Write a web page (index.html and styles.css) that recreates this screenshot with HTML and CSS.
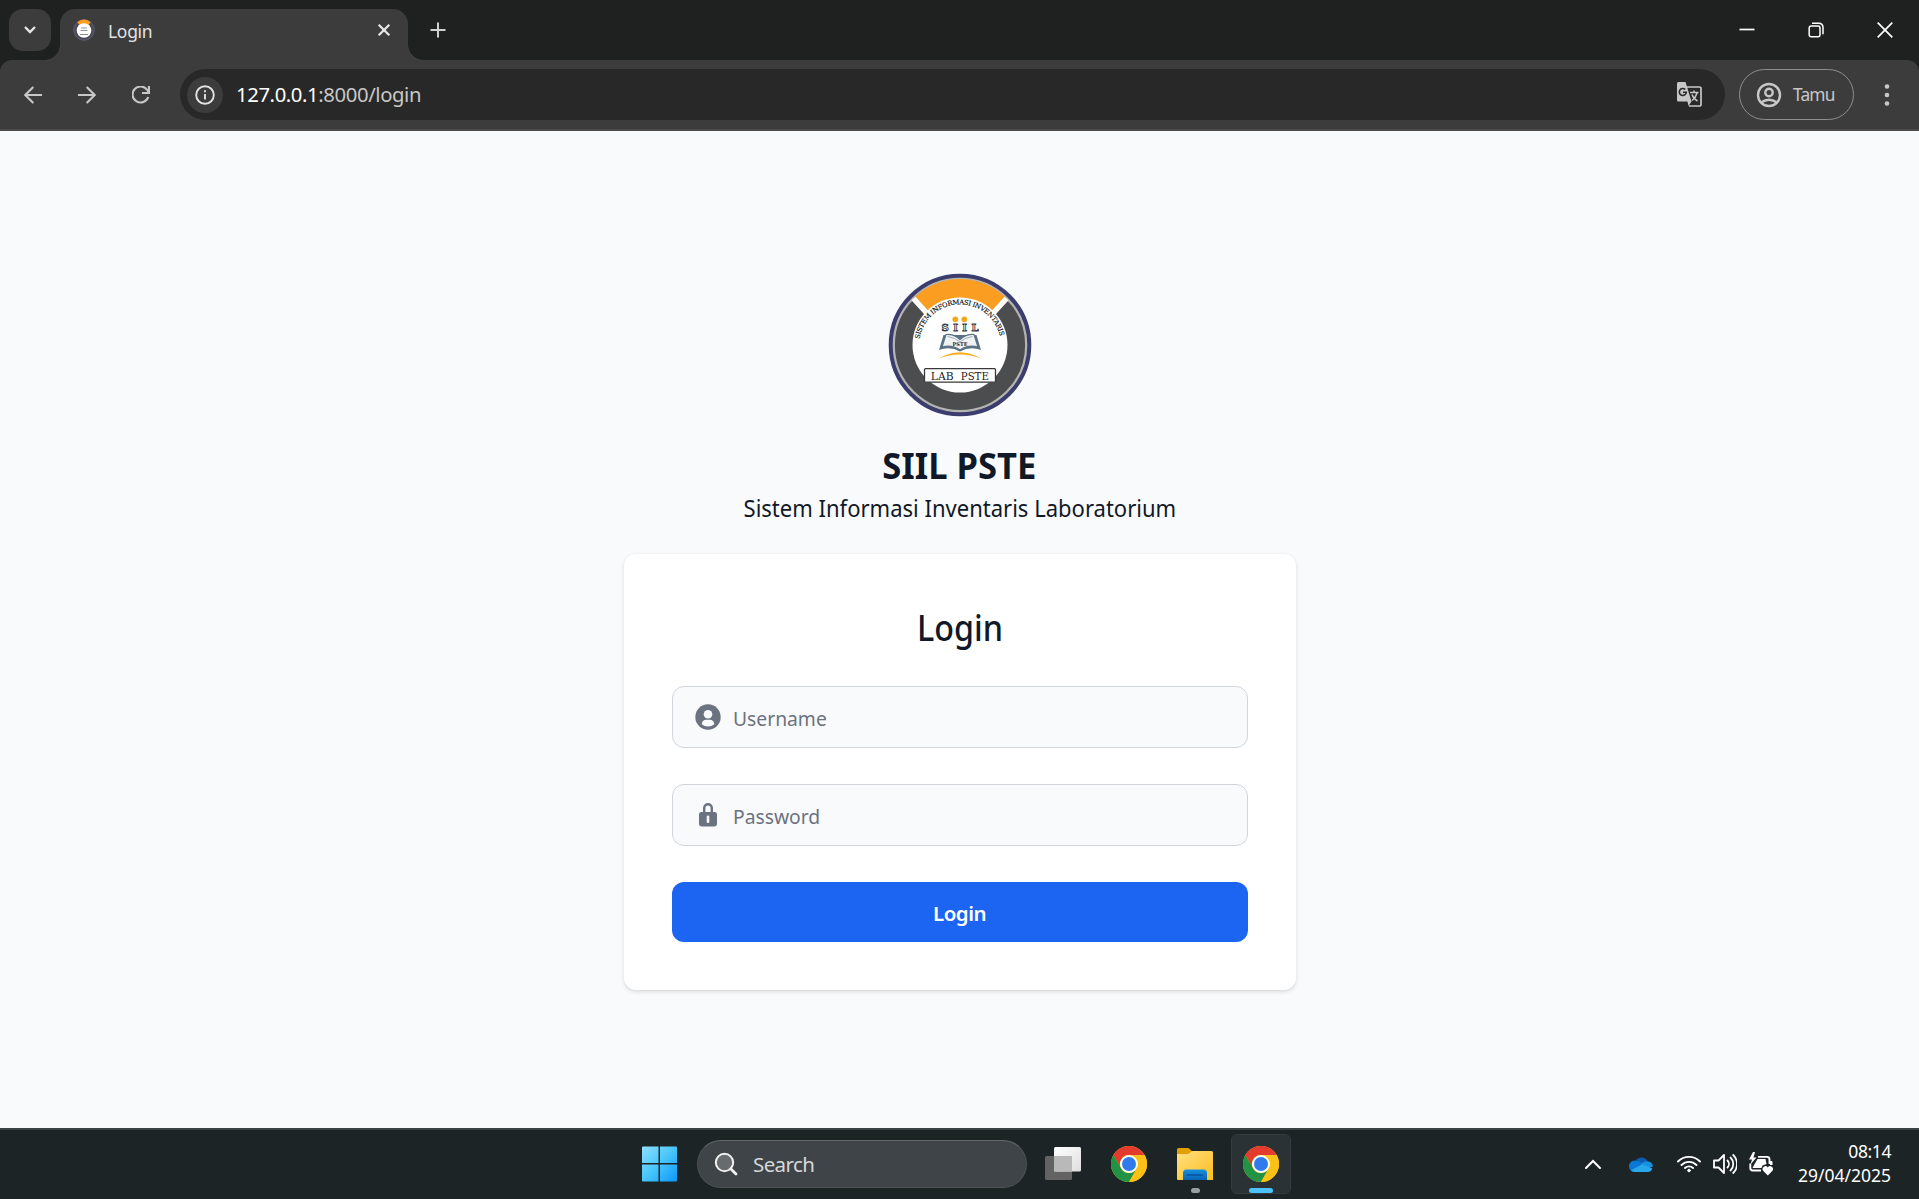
FILE: index.html
```
<!DOCTYPE html>
<html lang="id">
<head>
<meta charset="utf-8">
<title>Login</title>
<link rel="stylesheet" href="styles.css">
</head>
<body>
<svg class="defs" width="0" height="0" aria-hidden="true">
  <defs>
    <symbol id="chrome" viewBox="0 0 36 36">
      <circle cx="18" cy="18" r="18" fill="#fbc116"/>
      <path d="M2.4 9A18 18 0 0 1 33.6 9H18A9 9 0 0 0 10.2 22.5z" fill="#e33b2e"/>
      <path d="M2.4 9A18 18 0 0 0 18 36L25.8 22.5A9 9 0 0 1 10.2 22.5z" fill="#229342"/>
      <path d="M33.6 9A18 18 0 0 1 18 36L25.8 22.5A9 9 0 0 0 18 9z" fill="#fbc116"/>
      <circle cx="18" cy="18" r="9" fill="#fff"/>
      <circle cx="18" cy="18" r="7" fill="#2f7bed"/>
    </symbol>
    <symbol id="emblem" viewBox="0 0 144 144">
      <circle cx="72" cy="72" r="69.3" fill="#4b4d4e" stroke="#3b3d6e" stroke-width="4"/>
      <circle cx="72" cy="72" r="66.2" fill="none" stroke="#b5b4b4" stroke-width="2.2"/>
      <path d="M25 26A65.2 65.2 0 0 1 119 26L103 42A44 44 0 0 0 41 42z" fill="#fb9d20"/>
      <path d="M25.500 25.500L46 48M118.500 25.500L98 48" stroke="#fff" stroke-width="5.500"/>
      <circle cx="72" cy="72" r="47.500" fill="#fff"/>
      <path id="arc" d="M31.500 66A41 41 0 0 1 112.500 66" fill="none"/>
      <text class="emblem-serif" font-size="6.700" fill="#111" stroke="#111" stroke-width=".15"><textPath href="#arc" textLength="113" lengthAdjust="spacing">SISTEM INFORMASI INVENTARIS</textPath></text>
      <g class="emblem-serif" font-size="10" font-weight="700" fill="#fff" stroke="#3a3f47" stroke-width=".9" text-anchor="middle">
        <text x="57" y="58">S</text><text x="67.500" y="58">I</text><text x="76.500" y="58">I</text><text x="87" y="58">L</text>
      </g>
      <g fill="#f6a81c"><circle cx="67.300" cy="46.300" r="2.900"/><circle cx="76.300" cy="46.300" r="2.900"/></g>
      <path d="M55.500 62L51 77Q62 73 72 78.500Q82 73 93 77L88.500 62" fill="#5b7183"/>
      <path d="M58 61.500Q66 61 72 66.500Q78 61 86 61.500L90 74Q80 71.500 72 77Q64 71.500 54 74z" fill="#eef2f5" stroke="#5b7183" stroke-width="1.200"/>
      <path d="M59.500 63.500Q67 64.500 72 69Q77 64.500 84.500 63.500" fill="none" stroke="#9db0be"/>
      <text class="emblem-serif" x="72" y="72.500" font-size="5" font-weight="700" text-anchor="middle" fill="#24282d">PSTE</text>
      <path d="M51 85.500Q72 73 93 85.500Q72 77.500 51 85.500z" fill="#f5b021"/>
      <rect x="36.500" y="95.700" width="71" height="13.500" rx="1" fill="#fff" stroke="#38393a" stroke-width="1.300"/>
      <g class="emblem-serif" font-size="11.300" fill="#1c1c1c"><text x="42.800" y="106.700" textLength="22.800" lengthAdjust="spacingAndGlyphs">LAB</text><text x="72.800" y="106.700" textLength="28" lengthAdjust="spacingAndGlyphs">PSTE</text></g>
    </symbol>
  </defs>
</svg>

<header class="tabstrip">
  <button class="tab-search" aria-label="Search tabs"><svg width="14" height="10" viewBox="0 0 14 10"><path d="M2 2l5 5 5-5" fill="none" stroke="#e6e6e6" stroke-width="2.400"/></svg></button>
  <div class="tab">
    <svg width="22" height="22" viewBox="0 0 22 22"><circle cx="11" cy="11" r="10.300" fill="#4a4a55" stroke="#5d5d78"/><path d="M4.300 3A10 10 0 0 1 17.700 3L15 7H7z" fill="#fb9d20"/><circle cx="11" cy="11.500" r="7.300" fill="#fff"/><path d="M8 9h6M7.500 11.500h7" stroke="#8c98a0" stroke-width="1.200"/><path d="M7 15.500h8" stroke="#888"/></svg>
    <span class="tab-title">Login</span>
    <svg class="tab-close" width="14" height="14" viewBox="0 0 14 14"><path d="M1.700 1.700l10.600 10.600M12.300 1.700L1.700 12.300" stroke="#e8e8e8" stroke-width="2.200"/></svg>
  </div>
  <svg class="new-tab" width="16" height="16" viewBox="0 0 16 16"><path d="M8 .5v15M.5 8h15" stroke="#d0d0d0" stroke-width="2"/></svg>
  <div class="window-buttons">
    <svg width="16" height="16" viewBox="0 0 16 16"><path d="M.5 7.500h15" stroke="#fff" stroke-width="1.700"/></svg>
    <svg width="16" height="16" viewBox="0 0 16 16" fill="none" stroke="#fff" stroke-width="1.500"><rect x="1.200" y="4" width="10.800" height="10.800" rx="2"/><path d="M4 1.200h7a4 4 0 0 1 4 4v7"/></svg>
    <svg width="16" height="16" viewBox="0 0 16 16"><path d="M.7.7l14.600 14.600M15.300.7L.7 15.300" stroke="#fff" stroke-width="1.700"/></svg>
  </div>
</header>

<nav class="toolbar">
  <svg class="nav-icon" width="18" height="18" viewBox="0 0 18 18"><path d="M18 9H1.500M9.300 1L1.300 9l8 8"/></svg>
  <svg class="nav-icon" width="18" height="18" viewBox="0 0 18 18"><path d="M0 9h16.500M8.700 1l8 8-8 8"/></svg>
  <svg class="nav-icon" width="18" height="18" viewBox="0 0 18 18"><path d="M16.200 11A8 8 0 1 1 15.200 4L16.800 6.200M17 0v7h-7"/></svg>
  <div class="omnibox">
    <span class="site-info"><svg width="20" height="20" viewBox="0 0 20 20"><circle cx="10" cy="10" r="8.800" fill="none" stroke="#e3e3e3" stroke-width="1.900"/><path d="M10 9v5.500M10 5.300v2" stroke="#e3e3e3" stroke-width="1.900"/></svg></span>
    <span class="url"><b>127.0.0.1</b>:8000/login</span>
    <svg class="translate" width="26" height="26" viewBox="0 0 26 26">
      <path d="M9 6h14.500a1.500 1.500 0 0 1 1.500 1.500V23.500a1.500 1.500 0 0 1-1.500 1.500H13" fill="none" stroke="#c7c7c7" stroke-width="1.700"/>
      <path d="M2.500 1H9.500L15.500 20.500H2.500A1.500 1.500 0 0 1 1 19V2.500A1.500 1.500 0 0 1 2.500 1zM11.500 20.500h4L12.500 25z" fill="#c7c7c7"/>
      <path d="M9.300 8.500A3.500 3.500 0 1 0 10.300 11.200H7" fill="none" stroke="#282828" stroke-width="1.600"/>
      <path d="M14 11.500h8.500M18 9.500v2M21 12c-1 4-3 6-5 7.500M16 13.500c1 3 3 5 5.500 6.500" fill="none" stroke="#c7c7c7" stroke-width="1.500"/>
    </svg>
  </div>
  <div class="profile">
    <svg width="26" height="26" viewBox="0 0 26 26" fill="none" stroke="#c7c7c7" stroke-width="2.400"><circle cx="13" cy="13" r="11"/><circle cx="13" cy="10.500" r="3.700"/><path d="M5 20.500q8-5.500 16 0"/></svg>
    <span>Tamu</span>
  </div>
  <svg class="menu" width="6" height="22" viewBox="0 0 6 22" fill="#c7c7c7"><circle cx="3" cy="2.500" r="2.300"/><circle cx="3" cy="11" r="2.300"/><circle cx="3" cy="19.500" r="2.300"/></svg>
</nav>

<main class="page">
  <svg class="logo" width="144" height="144"><use href="#emblem"/></svg>
  <h1 class="brand">SIIL PSTE</h1>
  <p class="tagline">Sistem Informasi Inventaris Laboratorium</p>
  <form class="card">
    <h2 class="card-title">Login</h2>
    <label class="field">
      <svg width="26" height="26" viewBox="0 0 26 26"><circle cx="13" cy="13" r="12.700" fill="#6b7280"/><circle cx="13" cy="10.200" r="4.300" fill="#f9fafb"/><path d="M6.700 20.300C6.700 17.500 8.700 15.700 11 15.700h4c2.300 0 4.300 1.800 4.300 4.600Q16.500 22.500 13 22.500T6.700 20.300z" fill="#f9fafb"/></svg>
      <span>Username</span>
    </label>
    <label class="field">
      <svg width="26" height="26" viewBox="0 0 26 26"><path d="M9.200 11V6a3.800 3.800 0 0 1 7.600 0V11" fill="none" stroke="#6b7280" stroke-width="2.400"/><rect x="4" y="10" width="18" height="14.500" rx="2.400" fill="#6b7280"/><path d="M13 14.700v5" stroke="#f9fafb" stroke-width="2.600" stroke-linecap="round"/></svg>
      <span>Password</span>
    </label>
    <button class="submit" type="button">Login</button>
  </form>
</main>

<footer class="taskbar">
  <div class="apps">
    <svg class="start" width="36" height="36" viewBox="0 0 36 36">
      <defs><linearGradient id="win" gradientUnits="userSpaceOnUse" x1="0" y1="0" x2="36" y2="36"><stop offset="0" stop-color="#8fe0ff"/><stop offset=".5" stop-color="#46c5fb"/><stop offset="1" stop-color="#0a94f8"/></linearGradient></defs>
      <path d="M1 .5H16.500V17H0V1.500a1 1 0 0 1 1-1zM18 .5h16a1 1 0 0 1 1 1V17h-17zM0 18.500H16.500V35.500H1a1 1 0 0 1-1-1zM18 18.500h17V34.500a1 1 0 0 1-1 1h-16z" fill="url(#win)"/>
    </svg>
    <div class="search">
      <svg width="24" height="24" viewBox="0 0 24 24"><circle cx="10.500" cy="10.500" r="8.700" fill="#666b6d" stroke="#f0f0f0" stroke-width="2"/><path d="M16.700 16.700l5.300 5.300" stroke="#f0f0f0" stroke-width="2.800" stroke-linecap="round"/></svg>
      <span>Search</span>
    </div>
    <svg class="taskview" width="36" height="36" viewBox="0 0 36 36">
      <defs><linearGradient id="tv" x1="0" y1="0" x2="1" y2="1"><stop offset="0" stop-color="#fff"/><stop offset="1" stop-color="#dedede"/></linearGradient></defs>
      <rect x="0" y="10" width="27" height="24" rx="1.500" fill="#636363"/><rect x="9" y="1" width="27" height="24.500" rx="1.500" fill="url(#tv)"/><rect x="9" y="10" width="18" height="15.500" fill="#b9b9b9"/>
    </svg>
    <span class="app"><svg width="36" height="36"><use href="#chrome"/></svg></span>
    <span class="app running">
      <svg width="36" height="36" viewBox="0 0 36 36">
        <defs><linearGradient id="fold" x1="0" y1="0" x2="1" y2="1"><stop offset="0" stop-color="#ffe084"/><stop offset="1" stop-color="#fdbd1c"/></linearGradient><linearGradient id="clip" x1="0" y1="0" x2="0" y2="1"><stop offset="0" stop-color="#1490df"/><stop offset="1" stop-color="#0863b5"/></linearGradient></defs>
        <path d="M0 3.500A1.500 1.500 0 0 1 1.500 2H11.500L15.500 5.500V9H0z" fill="#dfa000"/><path d="M0 8H11L15.500 5H34.500A1.500 1.500 0 0 1 36 6.500V34H1A1 1 0 0 1 0 33z" fill="url(#fold)"/>
        <path d="M6 34V27a3.500 3.500 0 0 1 3.500-3.500h17A3.500 3.500 0 0 1 30 27v7z" fill="url(#clip)"/><path d="M10.500 29h14.500" stroke="#08539c" stroke-width="1.700" stroke-linecap="round"/>
      </svg>
    </span>
    <span class="app active"><svg width="36" height="36"><use href="#chrome"/></svg></span>
  </div>
  <div class="tray">
    <svg width="16" height="10" viewBox="0 0 16 10"><path d="M1 9l7-7 7 7" fill="none" stroke="#fff" stroke-width="2" stroke-linecap="round"/></svg>
    <svg class="cloud" width="24" height="16" viewBox="0 0 24 16"><path d="M6.500 5A7 7 0 0 1 18.500 5L17 9H6z" fill="#0d5cb0"/><path d="M0 10.500A5.500 5.500 0 0 1 7.500 5Q11 5 14 8L8 15.800H5A5.300 5.300 0 0 1 0 10.500z" fill="#0a78d4"/><path d="M12 8.500Q14.500 5 18.500 5.200A5.400 5.400 0 0 1 24 10.500L16 13z" fill="#1590df"/><path d="M2 14.300L13.500 8.300 23.500 12.500A5 5 0 0 1 19.500 16H5.500A6 6 0 0 1 2 14.300z" fill="#28a8ea"/></svg>
    <svg class="wifi" width="24" height="18" viewBox="0 0 24 18" fill="none" stroke="#fff" stroke-width="1.900" stroke-linecap="round"><path d="M1 6.500a15.500 15.500 0 0 1 22 0M4.500 10a10.600 10.600 0 0 1 15 0M8 13a5.700 5.700 0 0 1 8 0"/><circle cx="12" cy="15.500" r="1.300" fill="#fff" stroke-width="1"/></svg>
    <svg width="24" height="22" viewBox="0 0 24 22" fill="none" stroke="#fff" stroke-width="1.800" stroke-linejoin="round" stroke-linecap="round"><path d="M1 7.500h4.500L11 2v18L5.500 14.500H1zM14.500 7.500a5 5 0 0 1 0 7M17.500 4.500a9 9 0 0 1 0 13M20.200 2a12.500 12.500 0 0 1 0 18"/></svg>
    <svg class="battery" width="24" height="24" viewBox="0 0 24 24"><path d="M9 4.900H18a2.500 2.500 0 0 1 2.500 2.500V12M1.300 11.500V16a2.500 2.500 0 0 0 2.500 2.500H12" fill="none" stroke="#fff" stroke-width="1.900"/><path d="M21 9h1.500a1 1 0 0 1 1 1V13H21zM8.500 7H16.500L17.500 12 13.500 13.500 12.500 16H3.500L5 13z" fill="#fff"/><path d="M4 0L0 7.500H3L1.500 12.500 7.500 5.500H4.500L6 0z" fill="#fff"/><path d="M18.800 23.500l-4.700-4.800a2.800 2.800 0 0 1 4.700-3.200 2.800 2.800 0 0 1 4.700 3.200z" fill="#fff"/></svg>
    <div class="clock"><span class="time">08:14</span><span>29/04/2025</span></div>
  </div>
</footer>
</body>
</html>
```
FILE: styles.css
```
* { box-sizing: border-box; }
body {
  margin: 0;
  height: 1199px;
  display: flex;
  flex-direction: column;
  overflow: hidden;
  font-family: "Noto Sans", "Open Sans", sans-serif;
  background: #f9fafb;
}
svg { display: block; flex: none; }
.defs { position: absolute; }
button { border: 0; padding: 0; font: inherit; }
h1, h2, p { margin: 0; }
.emblem-serif { font-family: "DejaVu Serif", "Liberation Serif", serif; }

/* tab strip */
.tabstrip { height: 60px; flex: none; display: flex; align-items: flex-start; padding: 9px 26px 0 9px; background: #1f2120; }
.tab-search { width: 42px; height: 42px; border-radius: 14px; background: #3c3c3c; display: grid; place-items: center; }
.tab { position: relative; width: 348px; height: 51px; margin-left: 9px; padding: 0 17px 9px 13px; border-radius: 15px 15px 0 0; background: #3c3c3c; display: flex; align-items: center; }
.tab::before, .tab::after { content: ""; position: absolute; bottom: 0; width: 15px; height: 15px; }
.tab::before { left: -15px; background: radial-gradient(circle at 0 0, transparent 14.5px, #3c3c3c 15px); }
.tab::after { right: -15px; background: radial-gradient(circle at 100% 0, transparent 14.5px, #3c3c3c 15px); }
.tab-title { margin: 2px 0 0 13px; font-size: 17.5px; line-height: 24px; letter-spacing: -0.3px; color: #e3e3e3; }
.tab-close { margin-left: auto; }
.new-tab { margin: 13px 0 0 22px; }
.window-buttons { margin: 13px 0 0 auto; display: flex; gap: 53px; }

/* toolbar */
.toolbar { height: 71px; flex: none; display: flex; align-items: center; padding: 0 29px 0 24px; background: #3c3c3c; border-bottom: 2px solid #4a4a4a; border-radius: 12px 12px 0 0; box-shadow: 0 -12px 0 #1f2120; clip-path: inset(0); }
.nav-icon { margin: 1px 36px 0 0; fill: none; stroke: #c7c7c7; stroke-width: 2.1; }
.nav-icon:nth-child(3) { margin-right: 30px; }
.omnibox { width: 1545px; height: 51px; border-radius: 26px; background: #282828; display: flex; align-items: center; padding: 0 23px 0 7px; }
.site-info { width: 36px; height: 36px; border-radius: 50%; background: #3c3c3c; display: grid; place-items: center; }
.url { margin: -2px 0 0 13px; font-size: 20.3px; letter-spacing: -0.4px; color: #c7c7c7; }
.url b { font-weight: 400; color: #fff; }
.translate { margin: -1px 0 0 auto; }
.profile { width: 115px; height: 51px; margin-left: 14px; border: 1.5px solid #8e8e8e; border-radius: 26px; display: flex; align-items: center; padding-left: 16px; font-size: 17.3px; letter-spacing: -0.8px; color: #c7c7c7; }
.profile span { margin-left: 11px; }
.menu { margin: 1px 0 0 auto; }

/* login page */
.page { flex: 1; display: flex; flex-direction: column; align-items: center; padding-top: 142px; color: #111827; background: #f9fafb; }
.brand { margin-top: 25px; font-size: 36px; line-height: 48px; font-weight: 700; transform: scaleX(.96); }
.tagline { font-size: 23.5px; line-height: 36px; transform: scaleX(.937); }
.card { width: 672px; height: 436px; margin-top: 28px; padding: 46px 48px 48px; border-radius: 12px; background: #fff; box-shadow: 0 1.5px 4.5px rgba(0,0,0,.1), 0 1.5px 3px -1.5px rgba(0,0,0,.1); display: flex; flex-direction: column; }
.card-title { text-align: center; font-size: 35.5px; line-height: 54px; font-weight: 500; transform: scaleX(.91); margin-bottom: 32px; }
.field { height: 62px; flex: none; margin-bottom: 36px; border: 1px solid #d1d5db; border-radius: 12px; background: #f9fafb; display: flex; align-items: center; padding-left: 22px; font-size: 20.5px; color: #6b7280; }
.field span { margin: 2px 0 0 12px; transform: scaleX(.94); transform-origin: left; }
.submit { height: 60px; flex: none; padding-top: 1px; border-radius: 12px; background: #1c64f2; color: #fff; font-size: 20.5px; font-weight: 600; letter-spacing: -0.5px; }

/* taskbar */
.taskbar { height: 71px; flex: none; display: flex; padding-bottom: 2px; background: #1c2426; border-top: 2px solid #3c4344; }
.apps { display: flex; align-items: center; padding: 0 0 0 642px; }
.search { width: 330px; height: 48px; margin: 0 18px 0 19px; border-radius: 24px; background: #3e4447; border: 1.5px solid #4c5255; border-top-color: #62676a; display: flex; align-items: center; padding-left: 16px; color: #d6d8d9; font-size: 20.5px; letter-spacing: -0.6px; }
.search span { margin-left: 15px; }
.app { position: relative; width: 60px; height: 60px; margin-left: 6px; display: grid; place-items: center; border-radius: 6px; }
.taskview { margin-right: 12px; }
.active { background: #2a3235; border: 1.5px solid #343b3e; }
.running::after, .active::after { content: ""; position: absolute; bottom: 1px; left: 50%; width: 9px; height: 5px; margin-left: -4px; border-radius: 3px; background: #9a9fa1; }
.active::after { width: 24px; margin-left: -12px; bottom: 0; background: #4cc2ff; }
.tray { margin-left: auto; padding-right: 28px; display: flex; align-items: center; gap: 12px; }
.cloud { margin-left: 16px; }
.wifi { margin-left: 12px; }
.clock { width: 106px; margin-top: -2px; display: flex; flex-direction: column; align-items: flex-end; font-size: 17.5px; line-height: 24px; color: #fff; }
.time { letter-spacing: -0.4px; }
```
